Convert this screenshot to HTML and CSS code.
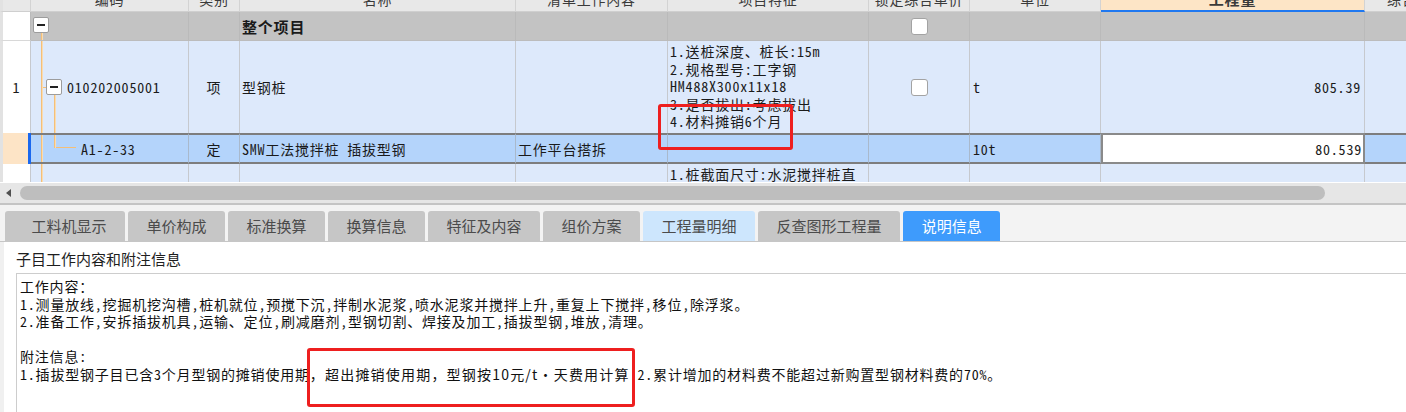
FILE: index.html
```html
<!DOCTYPE html>
<html lang="zh">
<head>
<meta charset="utf-8">
<title>说明信息</title>
<link rel="stylesheet" href="styles.css">
</head>
<body>
<div class="screen">
  <div class="grid">
    <div class="row hdr">
      <div class="c rn"></div>
      <div class="c h"><span>编码</span></div>
      <div class="c h"><span>类别</span></div>
      <div class="c h"><span>名称</span></div>
      <div class="c h"><span>清单工作内容</span></div>
      <div class="c h"><span>项目特征</span></div>
      <div class="c h"><span>锁定综合单价</span></div>
      <div class="c h"><span>单位</span></div>
      <div class="c h qty-h"><span>工程量</span></div>
      <div class="c h last-h"><span>综合单价</span></div>
    </div>

    <div class="row grp">
      <div class="c rn"></div>
      <div class="c code tree-0">
        <span class="box"></span>
      </div>
      <div class="c"></div>
      <div class="c name bold">整个项目</div>
      <div class="c"></div>
      <div class="c"></div>
      <div class="c mid"><span class="chk"></span></div>
      <div class="c"></div>
      <div class="c"></div>
      <div class="c"></div>
    </div>

    <div class="row r1">
      <div class="c rn mid">1</div>
      <div class="c code lvl1 tree-1">
        <span class="box"></span><span class="code-txt">010202005001</span>
      </div>
      <div class="c mid">项</div>
      <div class="c name">型钢桩</div>
      <div class="c"></div>
      <div class="c feat">
        <div>1.送桩深度、桩长:15m</div>
        <div>2.规格型号:工字钢</div>
        <div>HM488X300x11x18</div>
        <div>3.是否拔出:考虑拔出</div>
        <div>4.材料摊销6个月</div>
      </div>
      <div class="c mid"><span class="chk"></span></div>
      <div class="c unit">t</div>
      <div class="c num">805.39</div>
      <div class="c"></div>
    </div>

    <div class="row r2">
      <div class="c rn"></div>
      <div class="c code lvl2 tree-2">
        <span class="code-txt">A1-2-33</span>
      </div>
      <div class="c mid">定</div>
      <div class="c name">SMW工法搅拌桩 插拔型钢</div>
      <div class="c name">工作平台搭拆</div>
      <div class="c"></div>
      <div class="c"></div>
      <div class="c unit">10t</div>
      <div class="c num edit">80.539</div>
      <div class="c"></div>
    </div>

    <div class="row r3">
      <div class="c rn"></div>
      <div class="c code tree-3"></div>
      <div class="c"></div>
      <div class="c"></div>
      <div class="c"></div>
      <div class="c feat"><div>1.桩截面尺寸:水泥搅拌桩直</div></div>
      <div class="c"></div>
      <div class="c"></div>
      <div class="c"></div>
      <div class="c"></div>
    </div>
  </div>

  <div class="hscroll">
    <span class="arrow"></span>
    <div class="thumb"></div>
  </div>

  <div class="tabs">
    <div class="tab first">工料机显示</div>
    <div class="tab">单价构成</div>
    <div class="tab">标准换算</div>
    <div class="tab">换算信息</div>
    <div class="tab">特征及内容</div>
    <div class="tab">组价方案</div>
    <div class="tab light">工程量明细</div>
    <div class="tab">反查图形工程量</div>
    <div class="tab active">说明信息</div>
  </div>

  <div class="panel">
    <div class="panel-title">子目工作内容和附注信息</div>
    <div class="notes">
      <div>工作内容：</div>
      <div>1.测量放线,挖掘机挖沟槽,桩机就位,预搅下沉,拌制水泥浆,喷水泥浆并搅拌上升,重复上下搅拌,移位,除浮浆。</div>
      <div>2.准备工作,安拆插拔机具,运输、定位,刷减磨剂,型钢切割、焊接及加工,插拔型钢,堆放,清理。</div>
      <div class="blank"></div>
      <div>附注信息:</div>
      <div>1.插拔型钢子目已含3个月型钢的摊销使用期<span class="fw">，超出摊销使用期，型钢按10元/t・天费用计算</span> 2.累计增加的材料费不能超过新购置型钢材料费的70%。</div>
    </div>
  </div>

  <div class="mark mark-1"></div>
  <div class="mark mark-2"></div>
</div>
</body>
</html>
```

FILE: styles.css
```css
* { box-sizing: border-box; }

body {
  margin: 0;
  background: #ffffff;
  font-family: "Noto Sans CJK SC", sans-serif;
  color: #1a1a1a;
}

.screen {
  position: relative;
  width: 1406px;
  height: 412px;
  overflow: hidden;
  background: #ffffff;
}

/* ---------- grid ---------- */
.grid {
  height: 182px;
  overflow: hidden;
}

.row {
  display: grid;
  grid-template-columns: 31px 158px 51px 276px 152px 201px 101px 131px 264px 41px;
  font-size: 14px;
  letter-spacing: 0.8px;
  font-feature-settings: "hwid" 1;
}

.c {
  border-right: 1px solid #c9c9c9;
  overflow: hidden;
  white-space: nowrap;
  display: flex;
  align-items: center;
}

.c:last-child { border-right: none; }

.rn {
  border-left: 3px solid #e2e2e2;
  justify-content: center;
  background: #ffffff;
}

.mid { justify-content: center; }

/* header */
.hdr { height: 12px; background: #e8e8e8; }
.hdr .c { border-bottom: 1px solid #cfcfcf; border-right-color: #d3d3d3; }
.hdr .rn { background: #e8e8e8; }
.h {
  justify-content: center;
  align-items: flex-start;
  color: #3a3a3a;
  line-height: 14px;
}
.h span { margin-top: -8px; }
.qty-h {
  background: #fde5c6;
  border-bottom: 2px solid #1f78f0 !important;
  font-weight: bold;
  font-size: 15px;
}
.last-h { justify-content: flex-start; padding-left: 22px; }

/* group row */
.grp { height: 29px; background: #c3c3c3; }
.grp .c { border-bottom: 1px solid #bcbcbc; border-right-color: #bababa; }
.grp .rn { border-bottom-color: #d8d8d8; }
.bold { font-weight: bold; font-size: 15px; }

/* data rows */
.r1 { height: 92px; background: #dde9fb; }
.r2 { height: 31px; background: #b4d4fb; }
.r3 { height: 18px; background: #dde9fb; }

.r1 .c, .r3 .c { border-right-color: #c6c9ce; }
.r2 .c {
  border-top: 2px solid #7d7d7d;
  border-bottom: 2px solid #7d7d7d;
  border-right-color: #a9b9cc;
}
.r2 .rn {
  background: #fde4c6;
  border-top: none;
  border-bottom: none;
  border-right: 3px solid #1b68ee;
}

.name { padding-left: 2px; }
.unit { padding-left: 3px; }
.num { justify-content: flex-end; padding-right: 3px; }
.r2 .num.edit {
  background: #ffffff;
  border: 2px solid #8a8a8a;
  padding-right: 1px;
}

.feat {
  display: block;
  padding: 2px 0 0 2px;
  line-height: 17.6px;
}

/* tree */
.code { padding-left: 2px; }
.code.lvl1 { padding-left: 15px; }
.code.lvl2 { padding-left: 50px; }
.code-txt { margin-left: 5px; }
.lvl2 .code-txt { margin-left: 0; }

.box {
  width: 16px;
  height: 16px;
  flex: none;
  background: #ffffff;
  border: 1px solid #9c9c9c;
  border-radius: 2px;
  display: flex;
  align-items: center;
  justify-content: center;
}
.box::after {
  content: "";
  width: 8px;
  height: 2px;
  background: #222222;
}
.grp .box { align-self: flex-start; margin-top: 5px; }

/* tree connector lines drawn as cell backgrounds */
.tree-0 {
  background-image: linear-gradient(to right, #f4bf78 50%, #f9dcb2 50%);
  background-size: 2px 100%;
  background-position: 10px 21px;
  background-repeat: no-repeat;
}
.tree-1 {
  background-image:
    linear-gradient(to right, #f4bf78 50%, #f9dcb2 50%),
    linear-gradient(#f4bf78, #f4bf78),
    linear-gradient(to right, #f4bf78 50%, #f9dcb2 50%);
  background-size: 2px 100%, 6px 1px, 2px 100%;
  background-position: 10px 0, 10px 46px, 23px 54px;
  background-repeat: no-repeat;
}
.tree-2 {
  background-image:
    linear-gradient(to right, #f4bf78 50%, #f9dcb2 50%),
    linear-gradient(to right, #f4bf78 50%, #f9dcb2 50%),
    linear-gradient(#f4bf78, #f4bf78);
  background-size: 2px 100%, 2px 13px, 22px 1px;
  background-position: 10px 0, 23px 0, 23px 12px;
  background-repeat: no-repeat;
}
.tree-3 {
  background-image: linear-gradient(to right, #f4bf78 50%, #f9dcb2 50%);
  background-size: 2px 100%;
  background-position: 10px 0;
  background-repeat: no-repeat;
}

.chk {
  width: 17px;
  height: 17px;
  background: #ffffff;
  border: 1px solid #a3a3a3;
  border-radius: 3px;
}

/* ---------- horizontal scrollbar ---------- */
.hscroll {
  height: 23px;
  border-top: 1px solid #ffffff;
  border-bottom: 2px solid #c4c4c4;
  background: #e6e6e6;
  display: flex;
  align-items: center;
  padding-left: 6px;
}
.arrow {
  width: 0;
  height: 0;
  border-right: 5px solid #505050;
  border-top: 4px solid transparent;
  border-bottom: 4px solid transparent;
}
.thumb {
  margin-left: 9px;
  width: 1305px;
  height: 14px;
  border-radius: 7px;
  background: #bebebe;
}

/* ---------- tabs ---------- */
.tabs {
  height: 37px;
  background: #f3f3f3;
  border-bottom: 1px solid #c6c6c6;
  display: flex;
  align-items: flex-end;
  gap: 3px;
  padding-left: 5px;
}
.tab {
  height: 30px;
  padding: 0 18.5px;
  background: #c6c6c6;
  color: #4b4b4b;
  font-size: 15px;
  line-height: 30px;
  border-radius: 3px 3px 0 0;
  white-space: nowrap;
}
.tab.first { padding-left: 26.5px; }
.tab.light { background: #cde6fd; }
.tab.active { background: #3e9bfc; color: #ffffff; }

/* ---------- panel ---------- */
.panel {
  border-left: 4px solid #f0f0f0;
  padding: 7px 0 0 12px;
  height: 170px;
  overflow: hidden;
}
.panel-title {
  font-size: 15px;
  line-height: 20px;
  color: #1e1e1e;
  margin-bottom: 4px;
}
.notes {
  border-top: 1px solid #cdcdcd;
  border-left: 1px solid #cdcdcd;
  padding: 4px 0 0 3px;
  font-size: 14px;
  letter-spacing: 0.8px;
  font-feature-settings: "hwid" 1;
  line-height: 17.5px;
  color: #111111;
  white-space: nowrap;
  height: 160px;
  overflow: hidden;
}
.fw {
  font-feature-settings: normal;
  letter-spacing: 1.2px;
}
.blank { height: 17.5px; }

/* ---------- annotation marks ---------- */
.mark {
  position: absolute;
  border: 3px solid #ee1f1f;
  border-radius: 3px;
}
.mark-1 { left: 658px; top: 104px; width: 135px; height: 46px; }
.mark-2 { left: 307px; top: 348px; width: 328px; height: 59px; }
```
